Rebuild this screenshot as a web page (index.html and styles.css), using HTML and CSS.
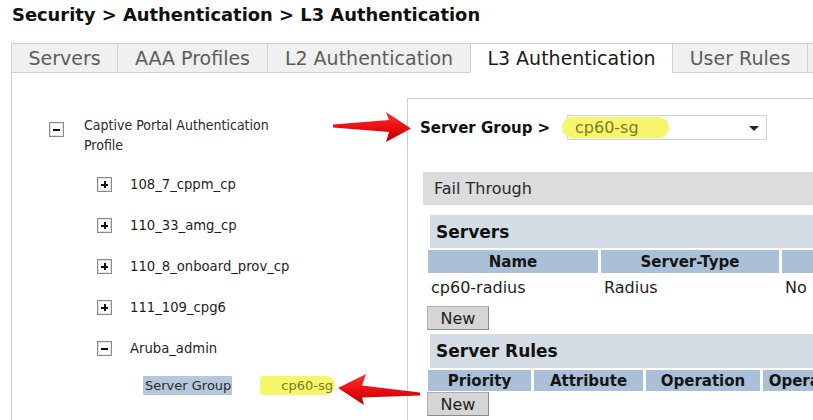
FILE: index.html
```html
<!DOCTYPE html>
<html>
<head>
<meta charset="utf-8">
<link rel="stylesheet" href="styles.css">
</head>
<body>
<div class="page">
  <h1 class="crumb">Security &gt; Authentication &gt; L3 Authentication</h1>
  <div class="tabs">
    <div class="tab t1">Servers</div>
    <div class="tab t2">AAA Profiles</div>
    <div class="tab t3">L2 Authentication</div>
    <div class="tab t4 active">L3 Authentication</div>
    <div class="tab t5">User Rules</div>
    <div class="tab t6"></div>
  </div>
  <div class="body">
    <div class="tree">
      <div class="node root">
        <span class="toggle minus"></span>
        <span class="root-label">Captive Portal Authentication Profile</span>
      </div>
      <div class="node child"><span class="toggle plus"></span><span class="label">108_7_cppm_cp</span></div>
      <div class="node child"><span class="toggle plus"></span><span class="label">110_33_amg_cp</span></div>
      <div class="node child"><span class="toggle plus"></span><span class="label">110_8_onboard_prov_cp</span></div>
      <div class="node child"><span class="toggle plus"></span><span class="label">111_109_cpg6</span></div>
      <div class="node child"><span class="toggle minus"></span><span class="label">Aruba_admin</span></div>
      <div class="node leaf"><span class="selected">Server Group</span><span class="marker leaf-val">cp60-sg</span></div>
    </div>
    <div class="detail">
      <div class="sg-row">
        <span class="sg-label">Server Group &gt;</span>
        <div class="select"><span class="marker sel-val">cp60-sg</span><span class="caret"></span></div>
      </div>
      <div class="fail">Fail Through</div>
      <div class="section">Servers</div>
      <table class="grid servers">
        <colgroup><col class="c-name"><col class="c-type"><col class="c-trim"></colgroup>
        <tr class="head"><th>Name</th><th>Server-Type</th><th>Trim-FQDN</th></tr>
        <tr class="row"><td>cp60-radius</td><td>Radius</td><td>No</td></tr>
      </table>
      <button class="btn">New</button>
      <div class="section rules">Server Rules</div>
      <table class="grid rules-table">
        <colgroup><col class="c-pri"><col class="c-attr"><col class="c-op"><col class="c-opd"></colgroup>
        <tr class="head"><th>Priority</th><th>Attribute</th><th>Operation</th><th>Operand</th></tr>
      </table>
      <button class="btn">New</button>
    </div>
  </div>
  <svg class="arrows" width="813" height="420" viewBox="0 0 813 420">
    <defs>
      <linearGradient id="red" x1="0" y1="0" x2="0" y2="1">
        <stop offset="0" stop-color="#ff3030"/>
        <stop offset="0.55" stop-color="#e80c10"/>
        <stop offset="1" stop-color="#b80000"/>
      </linearGradient>
    </defs>
    <polygon fill="url(#red)" points="333,124.5 389,120 386,112 411,128.5 386,142 389,132 333,127.5"/>
    <polygon fill="url(#red)" points="338,388 366,374 362,385.5 420,392.5 420,395.5 362,397.5 364,405"/>
  </svg>
</div>
</body>
</html>
```

FILE: styles.css
```css
html, body {
  margin: 0;
  padding: 0;
  background: #fff;
  overflow: hidden;
}
.page {
  position: relative;
  width: 813px;
  height: 420px;
  overflow: hidden;
  font-family: "DejaVu Sans", Verdana, sans-serif;
  color: #1e1e1e;
}
.crumb {
  margin: 0;
  height: 43px;
  box-sizing: border-box;
  padding-left: 12px;
  font-size: 17.9px;
  font-weight: bold;
  line-height: 30px;
  color: #111;
  white-space: nowrap;
}
.tabs {
  display: flex;
  margin-left: 11px;
  height: 30px;
}
.tab {
  flex: 0 0 auto;
  box-sizing: border-box;
  height: 30px;
  border-top: 1px solid #cfcfcf;
  border-left: 1px solid #cfcfcf;
  border-bottom: 1px solid #cfcfcf;
  background: #f0f0f0;
  color: #5c5c5c;
  font-size: 19px;
  line-height: 28px;
  text-align: center;
  white-space: nowrap;
}
.t1 { width: 106px; }
.t2 { width: 150px; }
.t3 { width: 203px; }
.t4 { width: 202px; }
.t5 { width: 135px; }
.t6 { width: 60px; }
.tab.active {
  background: #fff;
  color: #1a1a1a;
  border-bottom-color: #fff;
}
.body {
  display: flex;
  margin-left: 11px;
  height: 347px;
  border-left: 1px solid #cfcfcf;
}
.tree {
  flex: 0 0 395px;
  padding-top: 42px;
  box-sizing: border-box;
}
.node {
  display: flex;
  align-items: center;
}
.root {
  align-items: flex-start;
  margin-left: 37px;
  margin-bottom: 9px;
}
.root .toggle {
  margin-top: 7px;
  margin-right: 20px;
}
.root-label {
  width: 200px;
  font-family: "DejaVu Sans Condensed", "DejaVu Sans", sans-serif;
  font-size: 14px;
  line-height: 20px;
  color: #2a2a2a;
}
.child {
  height: 41px;
  margin-left: 85px;
}
.child .toggle {
  margin-right: 18px;
}
.label {
  font-size: 13.2px;
  color: #1e1e1e;
}
.toggle {
  position: relative;
  flex: 0 0 auto;
  width: 15px;
  height: 15px;
  box-sizing: border-box;
  border: 1px solid #8a8a8a;
  background: #fff;
  box-shadow: inset 0 0 0 1px #e4e4e4;
}
.toggle::before {
  content: "";
  position: absolute;
  left: 3px;
  top: 5.5px;
  width: 7px;
  height: 2px;
  background: #111;
}
.plus::after {
  content: "";
  position: absolute;
  left: 5.5px;
  top: 3px;
  width: 2px;
  height: 7px;
  background: #111;
}
.leaf {
  height: 33px;
  margin-left: 131px;
}
.selected {
  background: #b5c7dc;
  color: #2b2b2b;
  font-size: 13px;
  line-height: 19px;
  padding: 0 1px 0 2px;
}
.marker {
  background: #f6f66a;
  color: #7d7a2c;
}
.leaf-val {
  margin-left: 28px;
  padding: 0 2px 0 21px;
  font-size: 13px;
  line-height: 19px;
  border-radius: 4px 10px 10px 4px;
}
.detail {
  flex: 1 1 auto;
  margin-top: 25px;
  border-left: 1px solid #cfcfcf;
  border-top: 1px solid #cfcfcf;
  overflow: hidden;
}
.sg-row {
  display: flex;
  align-items: center;
  height: 25px;
  margin-top: 16px;
  padding-left: 12px;
}
.sg-label {
  flex: 0 0 147px;
  font-size: 15px;
  font-weight: bold;
  color: #111;
  white-space: nowrap;
}
.select {
  position: relative;
  display: flex;
  align-items: center;
  width: 200px;
  height: 25px;
  box-sizing: border-box;
  border: 1px solid #d2d2d2;
  background: #fff;
}
.sel-val {
  margin-left: -6px;
  padding: 0 30px 0 13px;
  font-size: 16px;
  line-height: 21px;
  border-radius: 11px;
}
.caret {
  position: absolute;
  right: 7px;
  top: 10px;
  width: 0;
  height: 0;
  border-left: 5px solid transparent;
  border-right: 5px solid transparent;
  border-top: 5px solid #222;
}
.fail {
  margin: 32px 0 0 15px;
  height: 33px;
  padding-left: 11px;
  background: #dcdcdc;
  font-size: 16px;
  line-height: 33px;
  color: #2a2a2a;
}
.section {
  margin: 10px 0 0 22px;
  height: 33px;
  padding-left: 6px;
  background: #d4dde6;
  font-size: 17px;
  font-weight: bold;
  line-height: 34px;
  color: #111;
}
.section.rules {
  margin-top: 4px;
  height: 34px;
}
.grid {
  margin: 2px 0 0 17px;
  border-collapse: separate;
  border-spacing: 3px 0;
  table-layout: fixed;
  font-size: 16px;
}
.servers { width: 540px; }
.rules-table { width: 425px; }
.grid th {
  height: 23px;
  padding: 0;
  background: #aac0d8;
  font-size: 15px;
  font-weight: bold;
  color: #151515;
  text-align: center;
  white-space: nowrap;
  overflow: hidden;
}
.rules-table th { height: 21px; }
.grid td {
  height: 29px;
  padding: 0 0 0 3px;
  color: #1e1e1e;
  white-space: nowrap;
}
.c-name { width: 170px; }
.c-type { width: 178px; }
.c-trim { width: 180px; }
.c-pri { width: 103px; }
.c-attr { width: 109px; }
.c-op { width: 114px; }
.c-opd { width: 84px; }
.btn {
  display: block;
  margin: 4px 0 0 19px;
  width: 62px;
  height: 24px;
  padding: 0;
  box-sizing: border-box;
  background: #d5d5d5;
  border: 1px solid #b0b0b0;
  border-right-color: #8c8c8c;
  border-bottom-color: #8c8c8c;
  font-family: "DejaVu Sans", Verdana, sans-serif;
  font-size: 16px;
  color: #1e1e1e;
}
.rules-table + .btn { margin-top: 1px; }
.arrows {
  position: absolute;
  left: 0;
  top: 0;
  pointer-events: none;
}
```
